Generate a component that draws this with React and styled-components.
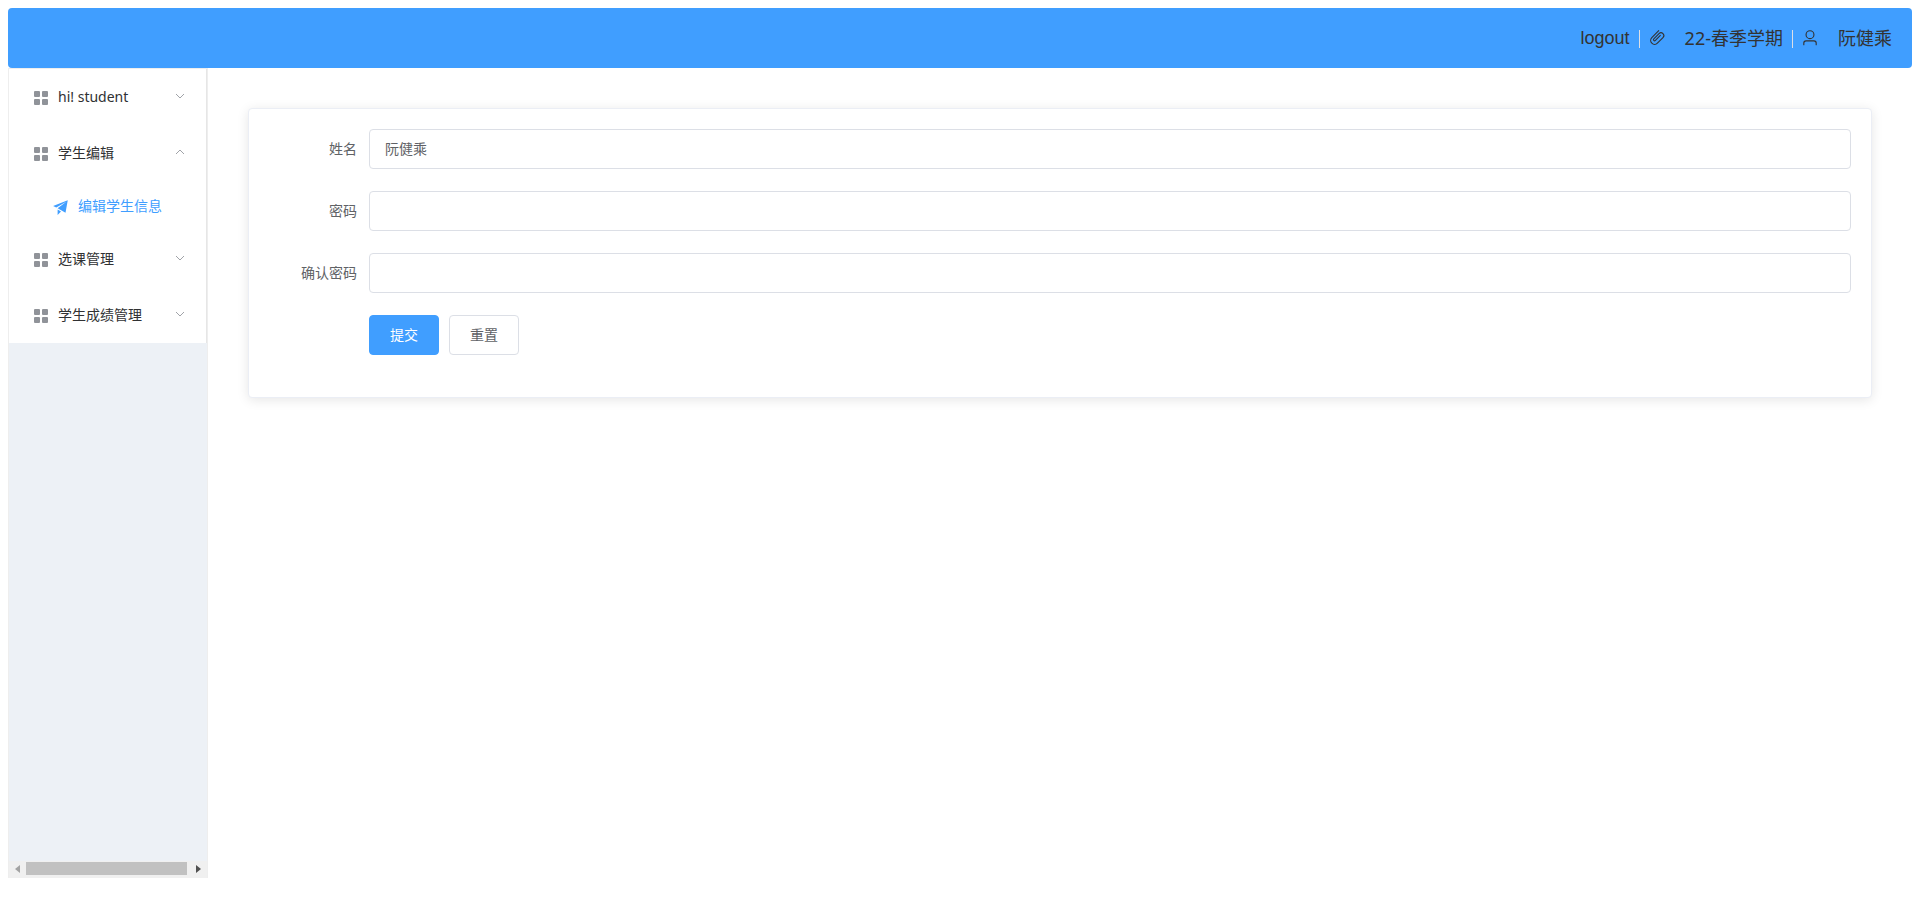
import React, { useState } from "react";
import styled, { createGlobalStyle } from "styled-components";

const menus = [
  { title: "hi! student", open: false, children: [] },
  { title: "学生编辑", open: true, children: ["编辑学生信息"] },
  { title: "选课管理", open: false, children: [] },
  { title: "学生成绩管理", open: false, children: [] },
];

const GridIcon = () => (
  <svg width="14" height="14" viewBox="0 0 14 14" fill="#909399">
    <rect x="0" y="0" width="6" height="6" rx="1" />
    <rect x="8" y="0" width="6" height="6" rx="1" />
    <rect x="0" y="8" width="6" height="6" rx="1" />
    <rect x="8" y="8" width="6" height="6" rx="1" />
  </svg>
);

const PlaneIcon = () => (
  <svg width="18" height="18" viewBox="0 0 1024 1024" fill="currentColor">
    <path d="m64 448 832-320-128 704-446.080-243.328L832 192 242.816 545.536 64 448zm256 512V657.024L512 768 320 960z" />
  </svg>
);

const ClipIcon = () => (
  <svg width="18" height="18" viewBox="0 0 1024 1024" fill="currentColor">
    <path d="M602.496 240.448A192 192 0 1 1 874.048 512l-316.800 316.800A256 256 0 0 1 195.200 466.752L602.496 59.456l45.248 45.248L240.448 512A192 192 0 0 0 512 783.552l316.800-316.800a128 128 0 1 0-181.056-181.056L353.600 579.904a32 32 0 1 0 45.248 45.248l294.144-294.144 45.312 45.248L444.096 670.400a96 96 0 1 1-135.744-135.744l294.144-294.208z" />
  </svg>
);

const UserIcon = () => (
  <svg width="18" height="18" viewBox="0 0 1024 1024" fill="currentColor">
    <path d="M512 512a192 192 0 1 0 0-384 192 192 0 0 0 0 384zm0 64a256 256 0 1 1 0-512 256 256 0 0 1 0 512zm320 320v-96a96 96 0 0 0-96-96H288a96 96 0 0 0-96 96v96a32 32 0 1 1-64 0v-96a160 160 0 0 1 160-160h448a160 160 0 0 1 160 160v96a32 32 0 1 1-64 0z" />
  </svg>
);

const Chevron = ({ up }) => (
  <svg width="12" height="12" viewBox="0 0 12 12" fill="none" stroke="#a0a3a8">
    <path d={up ? "M2 8l4-4 4 4" : "M2 4l4 4 4-4"} />
  </svg>
);

export default function App() {
  const [name, setName] = useState("阮健乘");
  const [password, setPassword] = useState("");
  const [confirm, setConfirm] = useState("");

  return (
    <>
      <GlobalStyle />
      <Header>
        <HeaderLink href="#logout">logout</HeaderLink>
        <Divider />
        <ClipIcon />
        <HeaderText>22-春季学期</HeaderText>
        <Divider />
        <UserIcon />
        <HeaderText>阮健乘</HeaderText>
      </Header>

      <Container>
        <Aside>
          <Menu>
            {menus.map(({ title, open, children }) => (
              <li key={title}>
                <MenuTitle type="button" aria-expanded={open}>
                  <IconBox><GridIcon /></IconBox>
                  <MenuLabel>{title}</MenuLabel>
                  <Arrow><Chevron up={open} /></Arrow>
                </MenuTitle>
                {open && children.map((child) => (
                  <MenuItem href="#edit" key={child}>
                    <IconBox><PlaneIcon /></IconBox>
                    <MenuLabel>{child}</MenuLabel>
                  </MenuItem>
                ))}
              </li>
            ))}
          </Menu>
          <ScrollBar aria-hidden="true">
            <svg width="5" height="8" viewBox="0 0 5 8"><path d="M5 0v8L0 4z" fill="#a3a3a3" /></svg>
            <Thumb />
            <svg width="5" height="8" viewBox="0 0 5 8"><path d="M0 0v8l5-4z" fill="#505050" /></svg>
          </ScrollBar>
        </Aside>

        <Main>
          <Card onSubmit={(e) => e.preventDefault()}>
            <FormItem>
              <Label htmlFor="name">姓名</Label>
              <Input id="name" value={name} onChange={(e) => setName(e.target.value)} />
            </FormItem>
            <FormItem>
              <Label htmlFor="password">密码</Label>
              <Input id="password" type="password" value={password} onChange={(e) => setPassword(e.target.value)} />
            </FormItem>
            <FormItem>
              <Label htmlFor="confirm">确认密码</Label>
              <Input id="confirm" type="password" value={confirm} onChange={(e) => setConfirm(e.target.value)} />
            </FormItem>
            <Actions>
              <Button type="submit" $primary>提交</Button>
              <Button type="reset">重置</Button>
            </Actions>
          </Card>
        </Main>
      </Container>
    </>
  );
}

const GlobalStyle = createGlobalStyle`
  * {
    box-sizing: border-box;
  }
  body {
    margin: 8px;
    background: #fff;
    color: #333;
    font-family: "Noto Sans", "Noto Sans CJK SC", sans-serif;
    font-size: 14px;
  }
  button, input {
    font-family: inherit;
    font-size: 14px;
  }
  svg {
    display: block;
    flex: none;
  }
`;

const Header = styled.header`
  display: flex;
  align-items: center;
  justify-content: flex-end;
  height: 60px;
  padding: 0 20px;
  border-radius: 4px;
  background: #409eff;
  font-size: 18px;
`;

const HeaderLink = styled.a`
  color: inherit;
  font-family: "Liberation Sans", sans-serif;
  text-decoration: none;
`;

const HeaderText = styled.span`
  margin-left: 19px;
  padding-bottom: 2px;
`;

const Divider = styled.span`
  width: 1px;
  height: 18px;
  margin: 2px 8px 0 9px;
  background: #dcdfe6;
`;

const Container = styled.div`
  display: flex;
  align-items: stretch;
`;

const Aside = styled.aside`
  display: flex;
  flex-direction: column;
  justify-content: space-between;
  flex: none;
  width: 200px;
  min-height: calc(100vh - 101px);
  border: solid #eee;
  border-width: 1px 1px 0;
  background: #edf1f6;
`;

const Menu = styled.ul`
  margin: 0;
  padding: 0;
  list-style: none;
  border-right: 1px solid #e6e6e6;
  background: #fff;
`;

const MenuTitle = styled.button`
  display: flex;
  align-items: center;
  width: 100%;
  height: 56px;
  padding: 0 20px;
  border: 0;
  background: none;
  color: #303133;
  cursor: pointer;
`;

const MenuItem = styled.a`
  display: flex;
  align-items: center;
  height: 50px;
  padding-left: 40px;
  color: #409eff;
  text-decoration: none;
`;

const IconBox = styled.span`
  display: flex;
  justify-content: center;
  width: 24px;
  margin-right: 5px;
  padding-top: 2px;
`;

const MenuLabel = styled.span`
  flex: 1;
  padding-bottom: 2px;
  text-align: left;
`;

const Arrow = styled.span`
  padding-bottom: 2px;
`;

const ScrollBar = styled.div`
  display: flex;
  align-items: center;
  justify-content: space-between;
  height: 17px;
  padding: 0 6px 2px;
  background: #f0f0f0;
`;

const Thumb = styled.div`
  flex: 1;
  height: 13px;
  margin: 0 9px 0 6px;
  background: #c1c1c1;
`;

const Main = styled.main`
  flex: 1;
  padding: 40px;
`;

const Card = styled.form`
  padding: 20px;
  border: 1px solid #ebeef5;
  border-radius: 4px;
  background: #fff;
  box-shadow: 0 2px 12px 0 rgba(0, 0, 0, 0.1);
`;

const FormItem = styled.div`
  display: flex;
  margin-bottom: 22px;
`;

const Label = styled.label`
  flex: none;
  width: 100px;
  padding-right: 12px;
  color: #606266;
  line-height: 40px;
  text-align: right;
`;

const Input = styled.input`
  flex: 1;
  min-width: 0;
  height: 40px;
  padding: 0 15px 2px;
  border: 1px solid #dcdfe6;
  border-radius: 4px;
  outline: none;
  color: #606266;
`;

const Actions = styled.div`
  display: flex;
  gap: 10px;
  margin: 0 0 22px 100px;
`;

const Button = styled.button`
  height: 40px;
  padding: 0 20px 2px;
  border: 1px solid ${({ $primary }) => ($primary ? "#409eff" : "#dcdfe6")};
  border-radius: 4px;
  background: ${({ $primary }) => ($primary ? "#409eff" : "#fff")};
  color: ${({ $primary }) => ($primary ? "#fff" : "#606266")};
  cursor: pointer;
`;
